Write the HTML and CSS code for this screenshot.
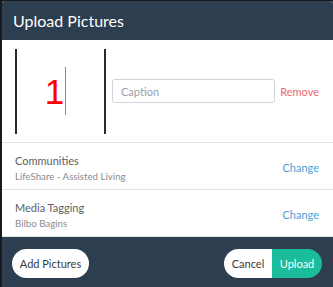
FILE: index.html
```html
<!DOCTYPE html>
<html lang="en">
<head>
    <meta charset="UTF-8">
    <meta name="viewport" content="width=device-width, initial-scale=1.0">
    <title>Upload Pictures</title>
    <link rel="stylesheet" href="styles.css">
</head>
<body>
    <div class="modal">
        <div class="modal-header">
            <h2>Upload Pictures</h2>
        </div>

        <div class="picture-row">
            <div class="picture-preview">
                <span class="picture-number">1</span><span class="picture-cursor"></span>
            </div>
            <input type="text" class="caption-input" placeholder="Caption">
            <a class="remove-link">Remove</a>
        </div>

        <div class="setting-row">
            <div class="setting-info">
                <div class="setting-title">Communities</div>
                <div class="setting-value">LifeShare - Assisted Living</div>
            </div>
            <a class="change-link">Change</a>
        </div>

        <div class="setting-row">
            <div class="setting-info">
                <div class="setting-title">Media Tagging</div>
                <div class="setting-value">Bilbo Bagins</div>
            </div>
            <a class="change-link">Change</a>
        </div>

        <div class="modal-footer">
            <button class="btn btn-add">Add Pictures</button>
            <div class="btn-group">
                <button class="btn btn-cancel">Cancel</button>
                <button class="btn btn-upload">Upload</button>
            </div>
        </div>
    </div>
</body>
</html>
```

FILE: styles.css
```css
body {
    margin: 0;
    padding: 1px 0 0 2px;
    background: #161a1f;
    font-family: Lato, sans-serif;
    overflow: hidden;
}

.modal {
    width: 331px;
    background: white;
    border-radius: 3px 3px 0 0;
    overflow: hidden;
}

.modal-header {
    height: 39px;
    background: #2c3e50;
    display: flex;
    align-items: center;
    padding-left: 11px;
}

.modal-header h2 {
    margin: 0;
    color: white;
    font-size: 16px;
    font-weight: 400;
}

.picture-row {
    height: 102px;
    display: flex;
    align-items: center;
    padding: 0 14px 0 13px;
    border-bottom: 1px solid #e2e4e6;
}

.picture-preview {
    width: 91px;
    height: 85px;
    box-sizing: border-box;
    border-left: 2px solid #2a2a2a;
    border-right: 2px solid #2a2a2a;
    display: flex;
    align-items: center;
    justify-content: center;
    padding-right: 10px;
}

.picture-number {
    color: #ff0000;
    font-size: 35px;
    line-height: 1;
    font-family: 'Liberation Sans', sans-serif;
}

.picture-cursor {
    width: 1px;
    height: 48px;
    background: #8a8a8a;
    margin-left: 1px;
}

.caption-input {
    width: 163px;
    height: 24px;
    box-sizing: border-box;
    margin-left: 6px;
    padding: 0 8px;
    border: 1px solid #cfd5dc;
    border-radius: 3px;
    font-family: inherit;
    font-size: 11px;
    color: #555;
}

.caption-input::placeholder {
    color: #9aa0a6;
}

.remove-link {
    margin-left: auto;
    color: #ea6b66;
    font-size: 11px;
}

.setting-row {
    height: 46px;
    display: flex;
    align-items: center;
    justify-content: space-between;
    padding: 0 14px 0 13px;
    border-bottom: 1px solid #e2e4e6;
}

.setting-row:last-of-type {
    border-bottom: none;
}

.setting-info {
    margin-top: 3px;
}

.setting-title {
    color: #606060;
    font-size: 11px;
    line-height: 16px;
}

.setting-value {
    color: #8c8c8c;
    font-size: 9.7px;
    line-height: 14px;
}

.change-link {
    color: #4a9fd5;
    font-size: 11px;
    margin-top: 2px;
}

.modal-footer {
    height: 50px;
    background: #2c3e50;
    display: flex;
    justify-content: space-between;
    align-items: flex-start;
    padding: 12px 11px 0 10px;
    box-sizing: border-box;
}

.btn {
    height: 29px;
    border: none;
    font-family: inherit;
    font-size: 11px;
    cursor: pointer;
    padding: 0;
}

.btn-add {
    width: 77px;
    background: white;
    color: #3a3a3a;
    border-radius: 15px;
}

.btn-group {
    display: flex;
    border-radius: 15px;
    overflow: hidden;
}

.btn-cancel {
    width: 48px;
    background: white;
    color: #3a3a3a;
}

.btn-upload {
    width: 50px;
    background: #1abc9c;
    color: white;
}
```
